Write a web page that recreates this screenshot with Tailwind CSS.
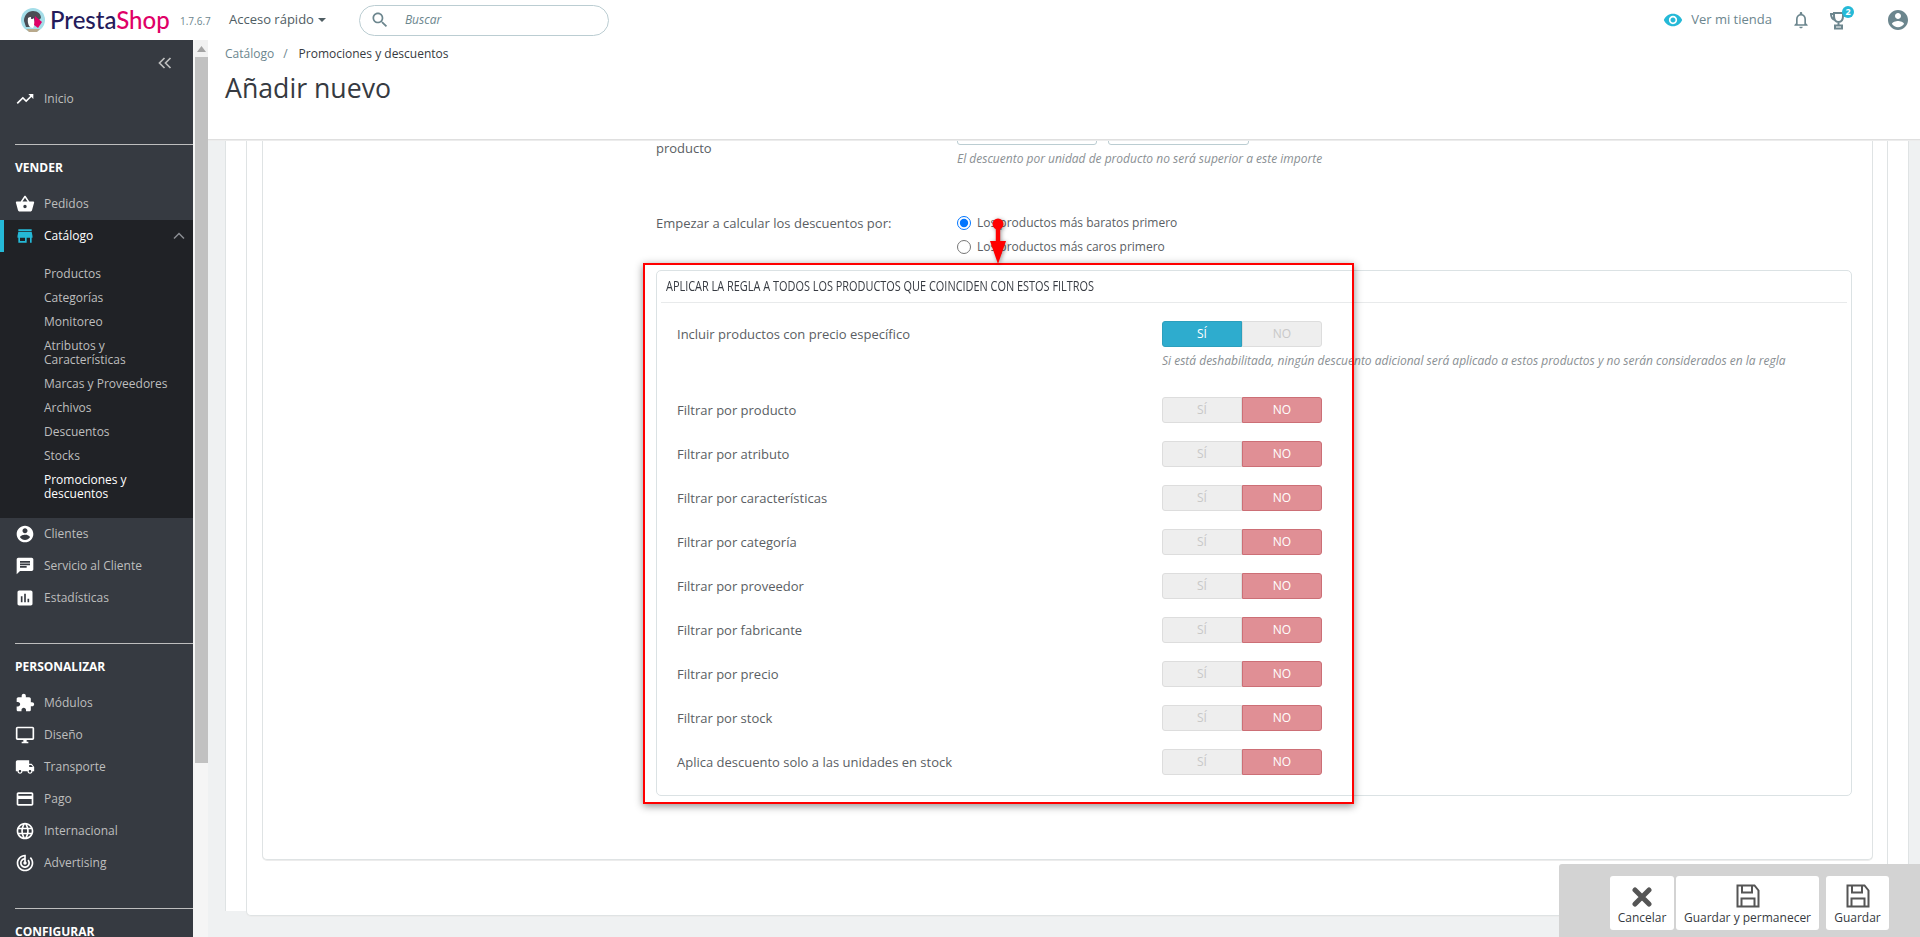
<!DOCTYPE html>
<html lang="es">
<head>
    <meta charset="UTF-8">
    <title>Añadir nuevo</title>
    <script src="https://cdn.jsdelivr.net/npm/@tailwindcss/browser@4"></script>
</head>
<body class="h-screen overflow-hidden flex flex-col bg-white text-[#363a41] font-['Open_Sans',sans-serif] text-[13px]">

    <!-- barra superior -->
    <header class="h-10 shrink-0 flex items-center bg-white">
        <svg class="ml-[21px] w-6 h-6 shrink-0" viewBox="0 0 24 24">
            <circle cx="12" cy="12" r="12" fill="#a4dde8"/>
            <path d="M3 13C3 7 7 3 12 3s8 3 8 7l-3 3-5 1-2 5H5z" fill="#4a4d55"/>
            <path d="M7 10c2-2 5-1 6 1l1 5-2 4c-3 0-6-3-5-10z" fill="#fff"/>
            <path d="M14 8l7 6-4 6-4-3z" fill="#df0067"/>
            <path d="M5 21h14l-3 3H8z" fill="#b9a98c"/>
            <circle cx="11" cy="10" r="1" fill="#25123c"/>
        </svg>
        <span class="ml-[5px] w-[119px] font-['Lato',sans-serif] text-[24px] font-medium leading-none whitespace-nowrap text-[#251b5b]">Presta<span class="text-[#df0067]">Shop</span></span>
        <span class="ml-[11px] w-[49px] text-[10px] text-[#6c868e] mt-[2px]">1.7.6.7</span>
        <span class="text-[13px] text-[#4f5d63] flex items-center gap-[4px]">Acceso rápido
            <svg class="w-2 h-2" viewBox="0 0 8 8"><path d="M0 2h8L4 6z" fill="#4f5d63"/></svg>
        </span>
        <div class="ml-[33px] w-[250px] h-[31px] border border-[#bbcdd2] rounded-full flex items-center">
            <svg class="ml-[10px] w-5 h-5" viewBox="0 0 24 24"><path fill="#6c868e" d="M15.5 14h-.79l-.28-.27C15.41 12.59 16 11.11 16 9.5 16 5.91 13.09 3 9.5 3S3 5.91 3 9.5 5.91 16 9.5 16c1.61 0 3.09-.59 4.23-1.57l.27.28v.79l5 4.99L20.49 19l-4.99-5zm-6 0C7.01 14 5 11.99 5 9.5S7.01 5 9.5 5 14 7.01 14 9.5 11.99 14 9.5 14z"/></svg>
            <span class="ml-[15px] italic text-[12px] text-[#6c868e]">Buscar</span>
        </div>
        <div class="ml-auto flex items-center text-[#6c868e]">
            <svg class="w-5 h-5" viewBox="0 0 24 24"><path fill="#25b9d7" d="M12 4.5C7 4.5 2.73 7.61 1 12c1.73 4.39 6 7.5 11 7.5s9.27-3.11 11-7.5c-1.73-4.39-6-7.5-11-7.5zM12 17c-2.76 0-5-2.24-5-5s2.24-5 5-5 5 2.24 5 5-2.24 5-5 5zm0-8c-1.66 0-3 1.34-3 3s1.34 3 3 3 3-1.34 3-3-1.34-3-3-3z"/></svg>
            <span class="ml-2 text-[13px]">Ver mi tienda</span>
            <svg class="ml-[19px] w-[20px] h-[20px]" viewBox="0 0 24 24"><path fill="#6c868e" d="M12 22c1.1 0 2-.9 2-2h-4c0 1.1.9 2 2 2zm6-6v-5c0-3.07-1.63-5.64-4.5-6.32V4c0-.83-.67-1.5-1.5-1.5s-1.5.67-1.5 1.5v.68C7.64 5.36 6 7.92 6 11v5l-2 2v1h16v-1l-2-2zm-2 1H8v-6c0-2.48 1.51-4.5 4-4.5s4 2.02 4 4.5v6z"/></svg>
            <div class="relative ml-[18px] w-5 h-5">
                <svg class="w-5 h-5" viewBox="0 0 20 20" fill="none" stroke="#6c868e" stroke-width="2"><path d="M5 3h9v3c0 4-2 6-4.500 6S5 10 5 6zM5 4H2c0 3 1 5 4 6M9.500 12v3"/><rect x="6" y="15.500" width="7" height="3"/></svg>
                <span class="absolute -top-[4px] left-[13px] w-[12px] h-[12px] rounded-full bg-[#25b9d7] text-white text-[9px] font-bold leading-[12px] text-center">2</span>
            </div>
            <svg class="ml-[37px] mr-[10px] w-[24px] h-[24px]" viewBox="0 0 24 24"><path fill="#6c868e" d="M12 2C6.48 2 2 6.48 2 12s4.48 10 10 10 10-4.48 10-10S17.52 2 12 2zm0 3c1.66 0 3 1.34 3 3s-1.34 3-3 3-3-1.34-3-3 1.34-3 3-3zm0 14.200c-2.500 0-4.710-1.280-6-3.220.03-1.990 4-3.080 6-3.080 1.990 0 5.970 1.090 6 3.080-1.290 1.940-3.500 3.220-6 3.220z"/></svg>
        </div>
    </header>

    <div class="flex-1 min-h-0 flex">
        <!-- menu lateral -->
        <nav class="w-[193px] shrink-0 bg-[#363a41] overflow-hidden text-[12px] text-[#bebebe]">
            <div class="h-[43px] flex items-center justify-end pr-[20px] pt-[2px]">
                <svg class="w-[16px] h-[16px]" viewBox="0 0 16 16" fill="none" stroke="#bebebe" stroke-width="1.700"><path d="M7.500 3L2.500 8l5 5M13.500 3l-5 5 5 5"/></svg>
            </div>
            <a class="h-8 flex items-center pl-[15px]">
                <svg class="w-[20px] h-[20px] mr-[9px]" viewBox="0 0 24 24"><path fill="#fff" d="M16 6l2.290 2.290-4.880 4.880-4-4L2 16.590 3.410 18l6-6 4 4 6.300-6.290L22 12V6z"/></svg>Inicio
            </a>
            <div class="mt-[29px] ml-[15px] border-t border-[#bebebe]"></div>
            <div class="h-[43px] flex items-center pl-[15px] pt-[2px] text-white font-bold">VENDER</div>
            <a class="h-8 flex items-center pl-[15px]">
                <svg class="w-[20px] h-[20px] mr-[9px]" viewBox="0 0 24 24"><path fill="#fff" d="M17.210 9l-4.380-6.560c-.19-.28-.51-.42-.83-.42-.32 0-.64.14-.83.43L6.790 9H2c-.55 0-1 .45-1 1 0 .09.01.18.04.27l2.540 9.270c.23.84 1 1.460 1.920 1.460h13c.92 0 1.690-.62 1.930-1.460l2.540-9.270L23 10c0-.55-.45-1-1-1h-4.790zM9 9l3-4.400L15 9H9zm3 8c-1.100 0-2-.9-2-2s.9-2 2-2 2 .9 2 2-.9 2-2 2z"/></svg>Pedidos
            </a>
            <div class="bg-[#202226]">
                <a class="h-8 flex items-center pl-[11px] border-l-4 border-[#25b9d7] text-white">
                    <svg class="w-[20px] h-[20px] mr-[9px]" viewBox="0 0 24 24"><path fill="#25b9d7" d="M20 4H4v2h16V4zm1 10v-2l-1-5H4l-1 5v2h1v6h10v-6h4v6h2v-6h1zm-9 4H6v-4h6v4z"/></svg>Catálogo
                    <svg class="ml-auto mr-[7px] w-[14px] h-[14px]" viewBox="0 0 14 14" fill="none" stroke="#8a8d92" stroke-width="1.500"><path d="M2 9.500l5-5 5 5"/></svg>
                </a>
                <ul class="pt-[10px] pb-[12px] pl-[44px] pr-2 leading-[14px]">
                    <li class="py-[5px]">Productos</li>
                    <li class="py-[5px]">Categorías</li>
                    <li class="py-[5px]">Monitoreo</li>
                    <li class="py-[5px]">Atributos y<br>Características</li>
                    <li class="py-[5px]">Marcas y Proveedores</li>
                    <li class="py-[5px]">Archivos</li>
                    <li class="py-[5px]">Descuentos</li>
                    <li class="py-[5px]">Stocks</li>
                    <li class="py-[5px] text-white">Promociones y<br>descuentos</li>
                </ul>
            </div>
            <a class="h-8 flex items-center pl-[15px]">
                <svg class="w-[20px] h-[20px] mr-[9px]" viewBox="0 0 24 24"><path fill="#fff" d="M12 2C6.480 2 2 6.480 2 12s4.480 10 10 10 10-4.480 10-10S17.520 2 12 2zm0 3c1.660 0 3 1.340 3 3s-1.340 3-3 3-3-1.340-3-3 1.340-3 3-3zm0 14.200c-2.500 0-4.710-1.280-6-3.220.03-1.990 4-3.080 6-3.080 1.990 0 5.970 1.090 6 3.080-1.290 1.940-3.500 3.220-6 3.220z"/></svg>Clientes
            </a>
            <a class="h-8 flex items-center pl-[15px]">
                <svg class="w-[20px] h-[20px] mr-[9px]" viewBox="0 0 24 24"><path fill="#fff" d="M20 2H4c-1.100 0-1.990.9-1.990 2L2 22l4-4h14c1.100 0 2-.9 2-2V4c0-1.100-.9-2-2-2zM6 9h12v2H6V9zm8 5H6v-2h8v2zm4-6H6V6h12v2z"/></svg>Servicio al Cliente
            </a>
            <a class="h-8 flex items-center pl-[15px]">
                <svg class="w-[20px] h-[20px] mr-[9px]" viewBox="0 0 24 24"><path fill="#fff" d="M19 3H5c-1.100 0-2 .9-2 2v14c0 1.100.9 2 2 2h14c1.100 0 2-.9 2-2V5c0-1.100-.9-2-2-2zM9 17H7v-7h2v7zm4 0h-2V7h2v10zm4 0h-2v-4h2v4z"/></svg>Estadísticas
            </a>
            <div class="mt-[29px] ml-[15px] border-t border-[#bebebe]"></div>
            <div class="h-[43px] flex items-center pl-[15px] pt-[2px] text-white font-bold">PERSONALIZAR</div>
            <a class="h-8 flex items-center pl-[15px]">
                <svg class="w-[20px] h-[20px] mr-[9px]" viewBox="0 0 24 24"><path fill="#fff" d="M20.500 11H19V7c0-1.100-.9-2-2-2h-4V3.500C13 2.120 11.880 1 10.500 1S8 2.120 8 3.500V5H4c-1.100 0-1.990.9-1.990 2v3.800H3.500c1.490 0 2.700 1.210 2.700 2.700s-1.210 2.700-2.700 2.700H2V20c0 1.100.9 2 2 2h3.800v-1.500c0-1.490 1.210-2.700 2.700-2.700 1.490 0 2.700 1.210 2.700 2.700V22H17c1.100 0 2-.9 2-2v-4h1.500c1.380 0 2.500-1.120 2.500-2.500S21.880 11 20.500 11z"/></svg>Módulos
            </a>
            <a class="h-8 flex items-center pl-[15px]">
                <svg class="w-[20px] h-[20px] mr-[9px]" viewBox="0 0 24 24"><path fill="#fff" d="M21 2H3c-1.100 0-2 .9-2 2v12c0 1.100.9 2 2 2h7v2H8v2h8v-2h-2v-2h7c1.100 0 2-.9 2-2V4c0-1.100-.9-2-2-2zm0 14H3V4h18v12z"/></svg>Diseño
            </a>
            <a class="h-8 flex items-center pl-[15px]">
                <svg class="w-[20px] h-[20px] mr-[9px]" viewBox="0 0 24 24"><path fill="#fff" d="M20 8h-3V4H3c-1.100 0-2 .9-2 2v11h2c0 1.660 1.340 3 3 3s3-1.340 3-3h6c0 1.660 1.340 3 3 3s3-1.340 3-3h2v-5l-3-4zM6 18.500c-.83 0-1.500-.67-1.500-1.500s.67-1.500 1.500-1.500 1.500.67 1.500 1.500-.67 1.500-1.500 1.500zm13.500-9l1.960 2.500H17V9.500h2.500zm-1.500 9c-.83 0-1.500-.67-1.500-1.500s.67-1.500 1.500-1.500 1.500.67 1.500 1.500-.67 1.500-1.500 1.500z"/></svg>Transporte
            </a>
            <a class="h-8 flex items-center pl-[15px]">
                <svg class="w-[20px] h-[20px] mr-[9px]" viewBox="0 0 24 24"><path fill="#fff" d="M20 4H4c-1.110 0-1.990.89-1.990 2L2 18c0 1.110.89 2 2 2h16c1.110 0 2-.89 2-2V6c0-1.110-.89-2-2-2zm0 14H4v-6h16v6zm0-10H4V6h16v2z"/></svg>Pago
            </a>
            <a class="h-8 flex items-center pl-[15px]">
                <svg class="w-[20px] h-[20px] mr-[9px]" viewBox="0 0 24 24"><path fill="#fff" d="M11.990 2C6.470 2 2 6.480 2 12s4.470 10 9.990 10C17.520 22 22 17.520 22 12S17.520 2 11.990 2zm6.930 6h-2.950c-.32-1.250-.78-2.450-1.380-3.560 1.840.63 3.370 1.910 4.330 3.560zM12 4.040c.83 1.200 1.480 2.530 1.910 3.960h-3.820c.43-1.430 1.080-2.760 1.910-3.960zM4.260 14C4.100 13.360 4 12.690 4 12s.1-1.360.26-2h3.380c-.08.66-.14 1.320-.14 2 0 .68.06 1.340.14 2H4.260zm.82 2h2.950c.32 1.250.78 2.450 1.380 3.560-1.840-.63-3.370-1.900-4.330-3.560zm2.950-8H5.080c.96-1.660 2.490-2.930 4.330-3.560C8.810 5.550 8.350 6.750 8.030 8zM12 19.960c-.83-1.200-1.480-2.530-1.910-3.960h3.820c-.43 1.430-1.080 2.760-1.910 3.960zM14.340 14H9.660c-.09-.66-.16-1.320-.16-2 0-.68.07-1.350.16-2h4.680c.09.65.16 1.320.16 2 0 .68-.07 1.340-.16 2zm.25 5.560c.6-1.110 1.060-2.310 1.380-3.560h2.950c-.96 1.650-2.490 2.930-4.330 3.560zM16.360 14c.08-.66.14-1.320.14-2 0-.68-.06-1.340-.14-2h3.380c.16.64.26 1.310.26 2s-.1 1.360-.26 2h-3.380z"/></svg>Internacional
            </a>
            <a class="h-8 flex items-center pl-[15px]">
                <svg class="w-[20px] h-[20px] mr-[9px]" viewBox="0 0 24 24"><path fill="#fff" d="M19.070 4.930l-1.410 1.410C19.100 7.790 20 9.790 20 12c0 4.420-3.580 8-8 8s-8-3.580-8-8c0-4.080 3.050-7.440 7-7.930v2.020C8.160 6.570 6 9.030 6 12c0 3.310 2.690 6 6 6s6-2.690 6-6c0-1.660-.67-3.160-1.760-4.240l-1.410 1.410C15.550 9.900 16 10.900 16 12c0 2.210-1.790 4-4 4s-4-1.790-4-4c0-1.860 1.280-3.410 3-3.860v2.140c-.6.35-1 .98-1 1.720 0 1.100.9 2 2 2s2-.9 2-2c0-.74-.4-1.380-1-1.720V2h-1C6.480 2 2 6.480 2 12s4.480 10 10 10 10-4.480 10-10c0-2.760-1.120-5.260-2.930-7.070z"/></svg>Advertising
            </a>
            <div class="mt-[29px] ml-[15px] border-t border-[#bebebe]"></div>
            <div class="h-[43px] flex items-center pl-[15px] pt-[2px] text-white font-bold">CONFIGURAR</div>
        </nav>

        <!-- barra de desplazamiento -->
        <div class="w-[15px] shrink-0 pl-[2px] bg-[#f5f5f5]">
            <div class="h-[17px] bg-[#f1f1f1] flex items-center justify-center">
                <svg class="w-[9px] h-[6px]" viewBox="0 0 9 6"><path d="M4.500 0L9 6H0z" fill="#a3a3a3"/></svg>
            </div>
            <div class="h-[706px] bg-[#c1c1c1]"></div>
        </div>

        <main class="flex-1 min-w-0 flex flex-col bg-[#eff1f2]">
            <div class="relative z-10 h-[100px] shrink-0 bg-white border-b border-[#dfdfdf] shadow-[0_1px_0_#ececec] pl-[17px] pt-[6px]">
                <div class="text-[12px] leading-4 flex">
                    <span class="text-[#6c868e]">Catálogo</span>
                    <span class="ml-[9px] text-[#6c868e]">/</span>
                    <span class="ml-[11px]">Promociones y descuentos</span>
                </div>
                <h1 class="mt-[8px] text-[26.700px] leading-[36px]">Añadir nuevo</h1>
            </div>

            <div class="flex-1 min-h-0 overflow-hidden pl-[17px] pr-[11px]">
                <div class="h-full bg-white border-x border-[#dfe3e4] px-[20px]">
                    <div class="bg-white border-x border-b border-[#dfe3e4] rounded-b-[5px] shadow-[0_1px_0_#ececec] pl-[15px] pr-[14px] pb-[55px]">
                        <div class="bg-white border-x border-b border-[#dfe3e4] rounded-b-[5px] shadow-[0_1px_0_#ececec] pl-[393px] pr-[20px] pb-[63px]">

                            <div class="-mt-[26px] flex">
                                <div class="w-[301px] pt-[25px] leading-[18px] text-[#5a5e63]">producto</div>
                                <div>
                                    <div class="flex gap-[11px]">
                                        <div class="w-[140px] h-[31px] border border-[#bbcdd2] rounded-[3px]"></div>
                                        <div class="w-[141px] h-[31px] border border-[#bbcdd2] rounded-[3px]"></div>
                                    </div>
                                    <p class="mt-[6px] text-[12px] leading-4 italic text-[#8a8f93]">El descuento por unidad de producto no será superior a este importe</p>
                                </div>
                            </div>

                            <div class="mt-[44px] flex">
                                <div class="w-[301px] leading-6 text-[#5a5e63]">Empezar a calcular los descuentos por:</div>
                                <div class="text-[12px] leading-6 text-[#5a5e63]">
                                    <label class="flex items-center"><input type="radio" name="orden" checked class="w-[14px] h-[14px] mr-[6px]">Los productos más baratos primero</label>
                                    <label class="flex items-center"><input type="radio" name="orden" class="w-[14px] h-[14px] mr-[6px]">Los productos más caros primero</label>
                                </div>
                            </div>

                            <section class="mt-[11px] border border-[#dbe2e4] rounded-[5px] pb-[20px]">
                                <h2 class="h-[32px] mx-[4px] pb-[2px] border-b border-[#e8eaeb] flex items-center pl-[5px] text-[14px] font-medium whitespace-nowrap">
                                    <span class="inline-block origin-left scale-x-[.78]">APLICAR LA REGLA A TODOS LOS PRODUCTOS QUE COINCIDEN CON ESTOS FILTROS</span>
                                </h2>
                                <div class="mt-[18px] flex items-center h-[26px] pl-[20px] text-[#5a5e63]">
                                    <span class="w-[485px] pt-[2px]">Incluir productos con precio específico</span>
                                    <div class="w-[160px] h-[26px] flex rounded-[3px] text-[12px] leading-[24px] text-center">
                                        <span class="w-[80px] bg-[#2eacce] text-white rounded-l-[3px] border border-[#2c9fbd]">SÍ</span>
                                        <span class="w-[80px] bg-[#eeeeee] text-[#c8c8c8] rounded-r-[3px] border border-[#dddddd]">NO</span>
                                    </div>
                                </div>
                                <p class="mt-[6px] ml-[505px] text-[12px] leading-4 italic text-[#8a8f93]">Si está deshabilitada, ningún descuento adicional será aplicado a estos productos y no serán considerados en la regla</p>
                                <div id="filtros" class="mt-[28px] flex flex-col gap-[18px]"></div>
                            </section>
                        </div>
                    </div>
                </div>
            </div>
        </main>
    </div>

    <!-- anotacion roja de la captura -->
    <div class="absolute left-[643px] top-[263px] w-[711px] h-[541px] border-2 border-[#f00] shadow-[0_2px_8px_rgba(0,0,0,.45)]"></div>
    <svg class="absolute left-[988px] top-[216px] w-[20px] h-[50px] drop-shadow-[1px_1px_2px_rgba(0,0,0,.4)]" viewBox="0 0 20 50">
        <circle cx="10" cy="8" r="5.500" fill="#f00"/>
        <path d="M7.800 8h4.400v17H18l-8 23-8-23h5.800z" fill="#f00"/>
    </svg>

    <!-- barra de acciones -->
    <div class="absolute right-0 bottom-0 w-[361px] h-[73px] bg-[#d3d3d3] rounded-tl-[3px] pl-[51px] pt-[12px] flex items-start text-[12px]">
        <button class="w-[64px] h-[54px] bg-white rounded-[3px] flex flex-col items-center">
            <svg class="mt-[11px] w-[20px] h-[20px]" viewBox="0 0 20 20"><path d="M3 3l14 14M17 3L3 17" stroke="#555" stroke-width="5" stroke-linecap="round"/></svg>
            <span class="mt-[3px] leading-4">Cancelar</span>
        </button>
        <button class="ml-[2px] w-[143px] h-[54px] bg-white rounded-[3px] flex flex-col items-center">
            <svg class="mt-[8px] w-[24px] h-[24px]" viewBox="0 0 24 24" fill="none" stroke="#555" stroke-width="2"><path d="M1.500 1.500h17l4 5v16h-21zM6 1.500v7h10v-7M5.500 22.500v-8h13v8"/></svg>
            <span class="mt-[2px] leading-4">Guardar y permanecer</span>
        </button>
        <button class="ml-[7px] w-[63px] h-[54px] bg-white rounded-[3px] flex flex-col items-center">
            <svg class="mt-[8px] w-[24px] h-[24px]" viewBox="0 0 24 24" fill="none" stroke="#555" stroke-width="2"><path d="M1.500 1.500h17l4 5v16h-21zM6 1.500v7h10v-7M5.500 22.500v-8h13v8"/></svg>
            <span class="mt-[2px] leading-4">Guardar</span>
        </button>
    </div>

    <script>
    const filtros = ['Filtrar por producto', 'Filtrar por atributo', 'Filtrar por características', 'Filtrar por categoría', 'Filtrar por proveedor', 'Filtrar por fabricante', 'Filtrar por precio', 'Filtrar por stock', 'Aplica descuento solo a las unidades en stock'];
    const contenedor = document.getElementById('filtros');
    filtros.forEach(nombre => {
        const fila = document.createElement('div');
        fila.className = "flex items-center h-[26px] pl-[20px] text-[#5a5e63]";
        fila.innerHTML = `<span class="w-[485px] pt-[2px]">${nombre}</span>
        <div class="w-[160px] h-[26px] flex rounded-[3px] text-[12px] leading-[24px] text-center">
            <span class="w-[80px] bg-[#eeeeee] text-[#c8c8c8] rounded-l-[3px] border border-[#dddddd]">SÍ</span>
            <span class="w-[80px] bg-[#e08f95] text-white rounded-r-[3px] border border-[#cc6f76]">NO</span>
        </div>`;
        contenedor.appendChild(fila);
    });
    </script>
</body>
</html>
